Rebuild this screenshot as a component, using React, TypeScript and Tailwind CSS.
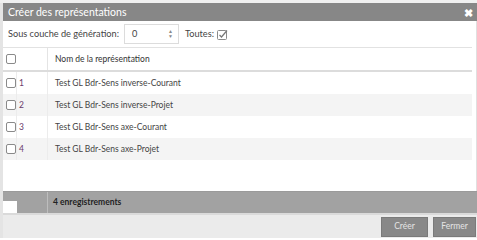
import React from "react";

const font = { fontFamily: 'Lato, "Open Sans", "Liberation Sans", sans-serif' };

function Box({ className = "" }: { className?: string }) {
  return (
    <span
      className={`inline-block w-[10px] h-[10px] rounded-[2px] border border-[#8a8a8a] bg-white ${className}`}
    />
  );
}

const rows = [
  "Test GL Bdr-Sens inverse-Courant",
  "Test GL Bdr-Sens inverse-Projet",
  "Test GL Bdr-Sens axe-Courant",
  "Test GL Bdr-Sens axe-Projet",
];

export default function App() {
  return (
    <div className="w-[477px] h-[240px] bg-white overflow-hidden" style={font}>
      <div className="h-[3px] bg-[#f0f0f0]" />
      <div className="flex flex-col h-[235px] border-l-[3px] border-[#e4e4e4]">
        <div className="h-[18px] bg-[#878787] flex items-center justify-between pl-[5px] pr-[4px] text-white">
          <span className="text-[10.5px] leading-none">Créer des représentations</span>
          <span className="text-[11px] font-bold leading-none">✖</span>
        </div>
        <div className="flex flex-col flex-1 pr-[4px] border-r-[1px] border-[#e0e0e0]">
          <div className="h-[26px] flex items-center pl-[5px] text-[9.2px] text-[#444]">
            <span>Sous couche de génération:</span>
            <div className="ml-[5px] w-[55px] h-[20px] border border-[#dcdcdc] flex items-center justify-between pl-[7px] pr-[5px]">
              <span>0</span>
              <span className="flex flex-col text-[#888] text-[5px] leading-[5px]">
                <span>▲</span>
                <span>▼</span>
              </span>
            </div>
            <span className="ml-[6px]">Toutes:</span>
            <svg className="ml-[3px]" width="11" height="11" viewBox="0 0 11 11">
              <rect x="0.5" y="1.5" width="9" height="9" rx="1" fill="white" stroke="#8a8a8a" />
              <path d="M2.5 6 L4.5 8 L10 1.5" fill="none" stroke="#777" strokeWidth="1.2" />
            </svg>
          </div>
          <div className="h-px bg-[#e2e2e2]" />
          <div className="flex h-[24px] items-center text-[8.5px] text-[#333] border-b-[2px] border-[#dcdcdc]">
            <div className="w-[45px] h-full flex items-center pl-[3px] border-r border-[#e4e4e4]">
              <Box />
            </div>
            <div className="pl-[7px]">Nom de la représentation</div>
          </div>
          {rows.map((r, i) => (
            <div
              key={i}
              className={`flex h-[22px] items-center text-[8.5px] text-[#444] ${i % 2 === 1 ? "bg-[#f4f4f4]" : "bg-white"}`}
            >
              <div className="w-[14px] h-full flex items-center pl-[3px] border-r border-[#ececec]">
                <Box />
              </div>
              <div className="w-[31px] h-full flex items-center pl-[2px] text-[#6a3a6a] border-r border-[#ececec]">
                {i + 1}
              </div>
              <div className="pl-[7px]">{r}</div>
            </div>
          ))}
          <div className="flex-1" />
        </div>
        <div className="flex h-[22px] bg-[#a2a2a2] border-t border-[#9a9a9a] pr-[2px]">
          <div className="w-[14px] h-full flex flex-col">
            <div className="h-[9px] bg-[#a2a2a2]" />
            <div className="flex-1 bg-white" />
          </div>
          <div className="w-[31px] h-full border-r border-[#bdbdbd]" />
          <div className="pl-[5px] flex items-center text-[8.5px] font-bold text-[#222]">
            4 enregistrements
          </div>
        </div>
        <div className="h-[25px] bg-[#ebebeb] border-t-[2px] border-[#dadada] flex items-center justify-end gap-[5px] pr-[1px]">
          <button className="w-[47px] h-[20px] bg-[#888] border border-[#7a7a7a] text-[8.5px] text-[#e4e4e4]">
            Créer
          </button>
          <button className="w-[43px] h-[20px] bg-[#888] border border-[#7a7a7a] text-[8.5px] text-[#e4e4e4]">
            Fermer
          </button>
        </div>
      </div>
    </div>
  );
}
